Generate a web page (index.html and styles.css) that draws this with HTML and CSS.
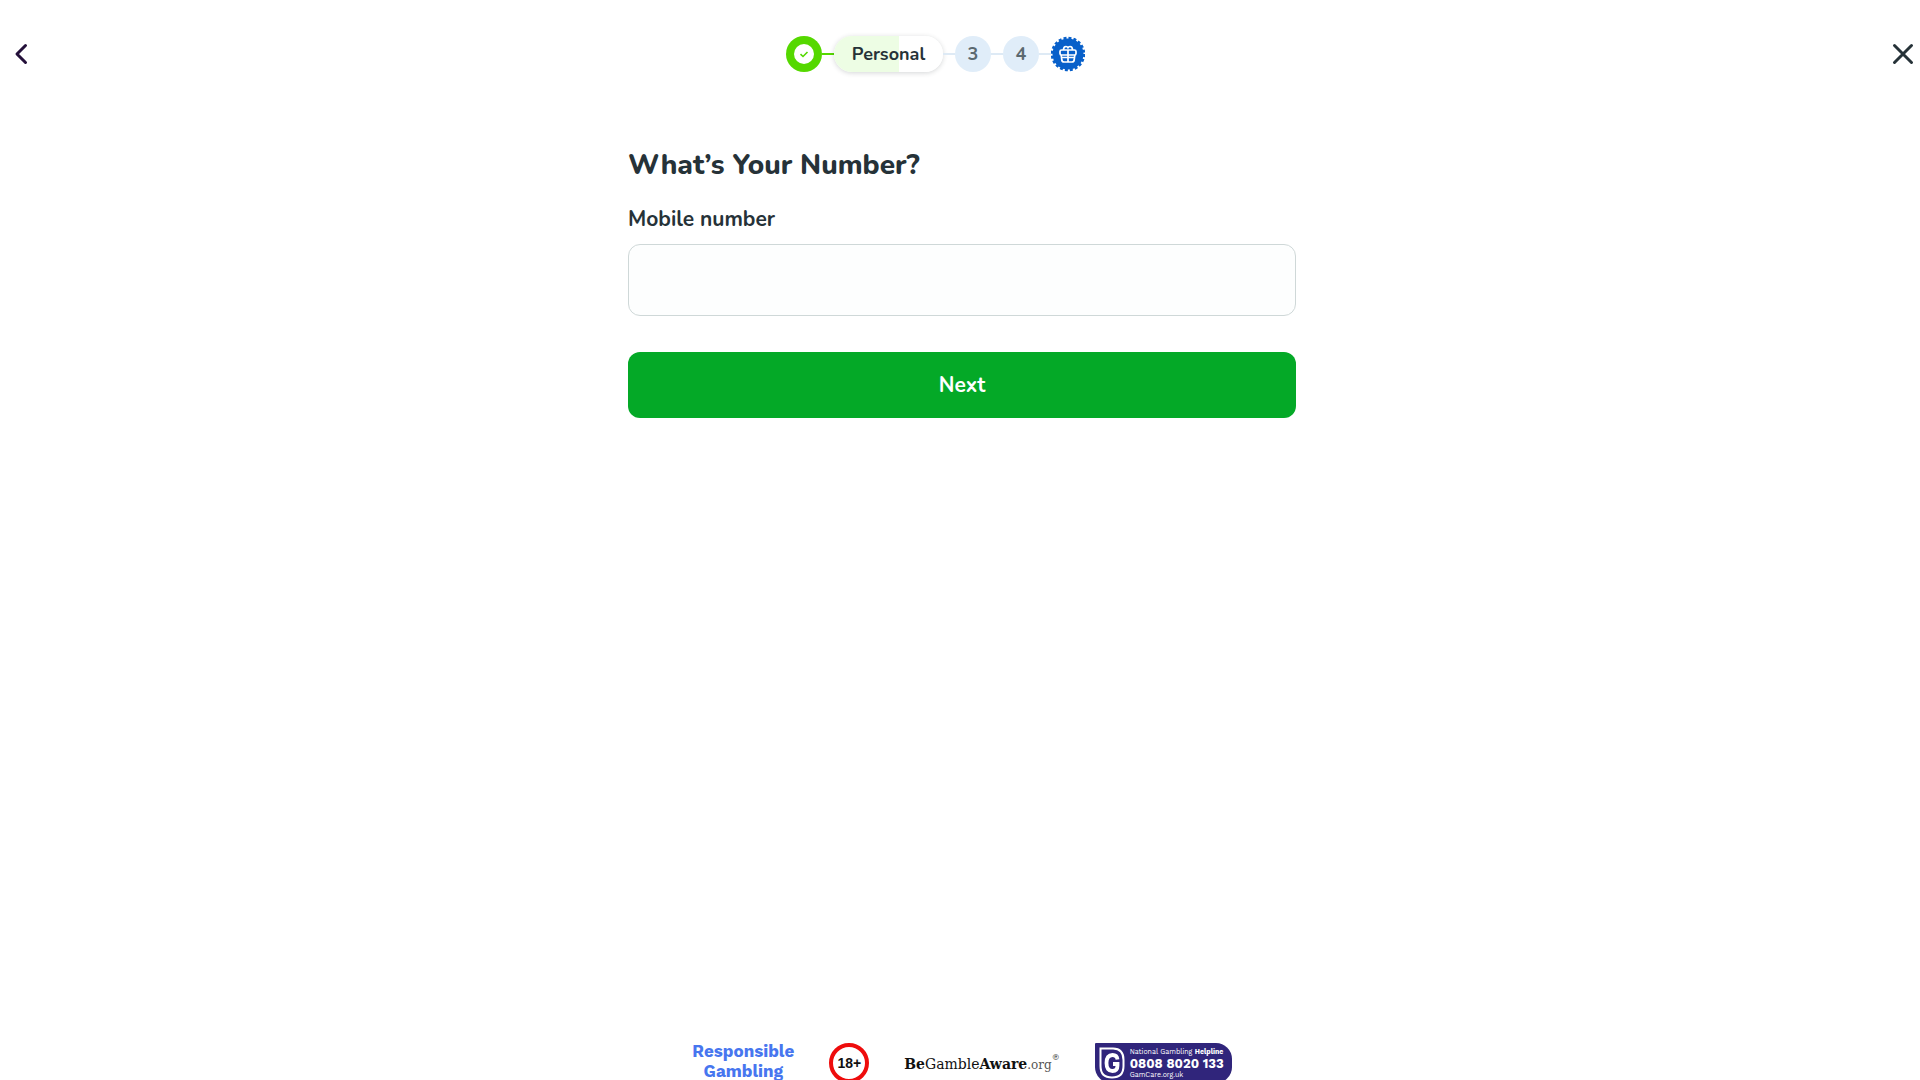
FILE: index.html
```html
<!DOCTYPE html>
<html lang="en">
<head>
<meta charset="utf-8">
<meta name="viewport" content="width=device-width, initial-scale=1">
<title>Registration</title>
<link rel="stylesheet" href="styles.css">
</head>
<body>
<header class="header">
  <button class="icon-button back" type="button" aria-label="Back">
    <svg width="16" height="24" viewBox="0 0 16 24"><path d="M12.500 3.500 4 12l8.500 8.500" fill="none" stroke="#24103a" stroke-width="3" stroke-linecap="round" stroke-linejoin="round"/></svg>
  </button>
  <ol class="steps">
    <li class="step done" aria-label="Step 1 complete">
      <svg width="36" height="36" viewBox="0 0 36 36"><circle cx="18" cy="18" r="18" fill="#55d800"/><circle cx="18" cy="18" r="10" fill="#fff"/><path d="m14.500 18.200 2.500 2.300 4.500-4.500" fill="none" stroke="#55d800" stroke-width="1.600"/></svg>
    </li>
    <li class="line line-done" aria-hidden="true"></li>
    <li class="step current" aria-current="step">Personal</li>
    <li class="line" aria-hidden="true"></li>
    <li class="step number">3</li>
    <li class="line" aria-hidden="true"></li>
    <li class="step number">4</li>
    <li class="line" aria-hidden="true"></li>
    <li class="step reward" aria-label="Reward">
      <svg width="34" height="36" viewBox="0 0 34 36">
        <circle cx="17" cy="18" r="15.500" fill="#0860ca"/>
        <circle cx="17" cy="18" r="15.500" fill="none" stroke="#0860ca" stroke-width="3.500" stroke-dasharray="2.900 1.970"/>
        <g fill="none" stroke="#fff" stroke-width="1.700" stroke-linejoin="round"><rect x="9" y="14" width="16" height="5" rx="1.500"/><path d="M10.200 19l.6 5q.3 2 2.300 2h7.800q2 0 2.300-2l.6-5M17 14v12M10.500 21.500h13M12.500 14q0-3.500 2.500-3.500 1.500 0 2 1.500.5-1.500 2-1.500 2.500 0 2.500 3.500"/></g>
      </svg>
    </li>
  </ol>
  <button class="icon-button close" type="button" aria-label="Close">
    <svg width="24" height="24" viewBox="0 0 24 24"><path d="m3.500 3.500 17 17m0-17-17 17" fill="none" stroke="#263238" stroke-width="3" stroke-linecap="round"/></svg>
  </button>
</header>

<main class="main">
  <form class="form">
    <h1 class="title">What’s Your Number?</h1>
    <label class="label" for="mobile">Mobile number</label>
    <input class="input" id="mobile" name="mobile" type="tel">
    <button class="next" type="button">Next</button>
  </form>
</main>

<footer class="footer">
  <a class="responsible" href="#">Responsible<br>Gambling</a>
  <span class="age">18+</span>
  <a class="aware" href="#"><b>Be</b>Gamble<b>Aware</b><span class="aware-org">.org</span><span class="aware-mark">®</span></a>
  <a class="gamcare" href="#">
    <svg width="26" height="32" viewBox="0 0 26 32" aria-hidden="true"><path d="M1.500 1.500H14Q24.500 1.500 24.500 13v6Q24.500 30.500 13 30.500 1.500 30.500 1.500 19Z" fill="none" stroke="#fff" stroke-width="2"/><path d="M18.500 12.500q-.5-4.500-5-4.500-6 0-6 8 0 8 6 8 5 0 5-5.500v-1.500h-4.500" fill="none" stroke="#fff" stroke-width="3.800"/></svg>
    <span class="gamcare-text">
      <span>National Gambling <b>Helpline</b></span>
      <strong class="gamcare-phone">0808 8020 133</strong>
      <span>GamCare.org.uk</span>
    </span>
  </a>
</footer>
</body>
</html>
```
FILE: styles.css
```css
* {
  box-sizing: border-box;
}

body {
  display: flex;
  flex-direction: column;
  height: 100vh;
  margin: 0;
  overflow: hidden;
  background: #fff;
  color: #263238;
  font-family: Nunito, "Noto Sans", sans-serif;
}

a {
  color: inherit;
  text-decoration: none;
}

/* Header and progress steps */
.header {
  display: flex;
  align-items: center;
  justify-content: space-between;
  height: 107px;
}

.icon-button {
  display: flex;
  align-items: center;
  height: 40px;
  padding: 0;
  border: 0;
  background: none;
  cursor: pointer;
}

.back {
  width: 40px;
  padding-left: 13px;
}

.close {
  justify-content: flex-end;
  width: 89px;
  padding-right: 5px;
}

.steps {
  display: flex;
  align-items: center;
  margin: 0;
  padding: 0;
  list-style: none;
}

.step {
  display: flex;
  align-items: center;
  justify-content: center;
  height: 36px;
  font-size: 18px;
  line-height: 24px;
  font-weight: 700;
}

.line {
  width: 12px;
  height: 2px;
  background: #deeaf5;
}

.line-done {
  background: #55d800;
}

.current {
  width: 109px;
  border-radius: 18px;
  background: linear-gradient(90deg, #edfde4 60%, #fff 60%);
  box-shadow: 0 1px 5px rgba(38, 50, 56, 0.2);
}

.number {
  width: 36px;
  border-radius: 50%;
  background: #e0edf9;
  color: #5b6970;
}

/* Form */
.main {
  flex: 1;
  padding: 0 16px 0 20px;
}

.form {
  display: flex;
  flex-direction: column;
  max-width: 668px;
  margin: 0 auto;
  padding-top: 38px;
}

.title {
  margin: 0 0 20px;
  font-size: 28px;
  line-height: 40px;
  font-weight: 800;
}

.label {
  margin-bottom: 11px;
  font-size: 21px;
  line-height: 28px;
  font-weight: 700;
}

.input {
  height: 72px;
  padding: 0 20px;
  border: 1px solid #cfd8d8;
  border-radius: 12px;
  background: #fdfefe;
  font: inherit;
}

.next {
  height: 66px;
  margin-top: 36px;
  border: 0;
  border-radius: 12px;
  background: #04a927;
  color: #fff;
  font: inherit;
  font-size: 21px;
  font-weight: 700;
  cursor: pointer;
}

/* Footer */
.footer {
  display: flex;
  align-items: flex-start;
  justify-content: center;
  gap: 35px;
  margin-bottom: -3px;
  padding-left: 4px;
}

.responsible {
  margin-top: -2px;
  color: #4776ef;
  font-family: "Work Sans", Inter, sans-serif;
  font-size: 17px;
  line-height: 20px;
  font-weight: 700;
  text-align: center;
}

.age {
  display: flex;
  align-items: center;
  justify-content: center;
  width: 40px;
  height: 40px;
  border: 4px solid #ee0c0c;
  border-radius: 50%;
  color: #111;
  font-family: "Liberation Sans", sans-serif;
  font-size: 14px;
  font-weight: 700;
}

.aware {
  display: flex;
  align-items: baseline;
  padding-top: 11px;
  color: #111;
  font-family: "DejaVu Serif", serif;
  font-size: 14px;
  line-height: 20px;
}

.aware-org {
  font-size: 12px;
  color: #555;
}

.aware-mark {
  align-self: flex-start;
  font-size: 8px;
  line-height: 8px;
}

.gamcare {
  display: flex;
  align-items: center;
  gap: 5px;
  width: 137px;
  height: 40px;
  padding-left: 4px;
  border-radius: 1px 16px 16px 16px;
  background: #30257b;
  color: #fff;
}

.gamcare-text {
  display: flex;
  flex-direction: column;
  font-family: "Work Sans", Inter, sans-serif;
  font-size: 7px;
  line-height: 10px;
  white-space: nowrap;
}

.gamcare-phone {
  font-size: 13px;
  line-height: 13px;
}
```
